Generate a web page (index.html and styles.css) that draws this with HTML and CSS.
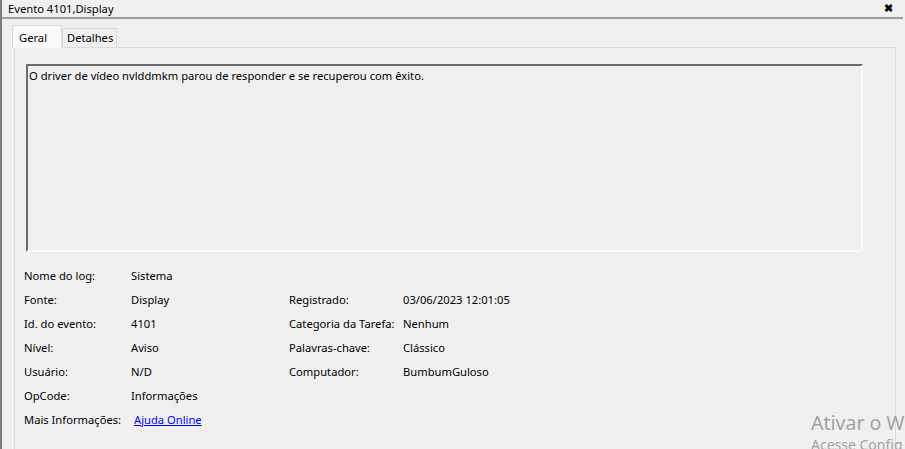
FILE: index.html
```html
<!DOCTYPE html>
<html lang="pt">
<head>
    <meta charset="UTF-8">
    <meta name="viewport" content="width=device-width, initial-scale=1.0">
    <title>Evento 4101,Display</title>
    <link rel="stylesheet" href="styles.css">
</head>
<body>

<!-- Janela de propriedades do evento -->
<div class="window">
    <div class="titlebar">
        <span class="title">Evento 4101,Display</span>
        <span class="close">&#x2716;</span>
    </div>

    <!-- Abas -->
    <div class="tabs">
        <div class="tab active">Geral</div>
        <div class="tab">Detalhes</div>
    </div>

    <div class="panel">
        <div class="description">O driver de vídeo nvlddmkm parou de responder e se recuperou com êxito.</div>

        <!-- Propriedades -->
        <div class="props">
            <span>Nome do log:</span><span>Sistema</span><span></span><span></span>
            <span>Fonte:</span><span>Display</span><span>Registrado:</span><span>03/06/2023 12:01:05</span>
            <span>Id. do evento:</span><span>4101</span><span>Categoria da Tarefa:</span><span>Nenhum</span>
            <span>Nível:</span><span>Aviso</span><span>Palavras-chave:</span><span>Clássico</span>
            <span>Usuário:</span><span>N/D</span><span>Computador:</span><span>BumbumGuloso</span>
            <span>OpCode:</span><span>Informações</span><span></span><span></span>
            <span>Mais Informações:</span><span><a href="#" class="link">Ajuda Online</a></span><span></span><span></span>
        </div>
    </div>
</div>

<!-- Marca d'água de ativação (cortada pela borda da janela) -->
<div class="watermark">
    <div class="wm-title">Ativar o W</div>
    <div class="wm-sub">Acesse Config</div>
</div>

</body>
</html>
```

FILE: styles.css
```css
html, body {
    margin: 0;
    height: 100%;
    overflow: hidden;
}

body {
    background-color: #f0f0f0;
    font-family: 'Noto Sans', 'Open Sans', sans-serif;
    font-size: 11.2px;
    color: #000;
    position: relative;
}

/* Window frame */
.window {
    height: 100%;
    border-left: 2px solid #7c7c7c;
    box-sizing: border-box;
}

.titlebar {
    height: 17px;
    border-bottom: 2px solid #a0a0a0;
    display: flex;
    justify-content: space-between;
    align-items: center;
    padding: 0 10px 0 6px;
    margin-right: 2px;
}

.title {
    line-height: 15px;
}

.close {
    font-size: 11px;
    font-weight: bold;
    line-height: 11px;
    margin-top: -3px;
}

/* Tabs */
.tabs {
    display: flex;
    align-items: flex-end;
    margin: 6px 0 0 10px;
    height: 22px;
}

.tab {
    padding: 0 3px 0 4px;
    height: 19px;
    line-height: 18px;
    background-color: #f0f0f0;
    border: 1px solid #dadada;
    border-bottom: none;
    box-sizing: border-box;
}

.tab.active {
    height: 23px;
    width: 50px;
    padding: 3px 0 0 6px;
    background-color: #f9f9f9;
    margin-bottom: -1px;
    position: relative;
    z-index: 1;
}

/* Tab panel */
.panel {
    margin-left: 12px;
    width: 882px;
    height: 440px;
    border: 1px solid #dcdcdc;
    box-sizing: border-box;
    padding: 16px 0 0 11px;
}

.description {
    width: 837px;
    height: 188px;
    box-sizing: border-box;
    border-top: 2px solid #6d6d6d;
    border-left: 2px solid #6d6d6d;
    border-right: 2px solid #fbfbfb;
    border-bottom: 2px solid #fbfbfb;
    padding: 2px 1px;
    line-height: 16px;
}

.props {
    display: grid;
    grid-template-columns: 107px 158px 114px auto;
    grid-auto-rows: 24px;
    margin: 12px 0 0 -2px;
    line-height: 24px;
}

.link {
    color: #0000ff;
    margin-left: 3px;
}

/* Activation watermark */
.watermark {
    position: absolute;
    left: 811px;
    top: 410px;
    color: #a3a3a3;
    white-space: nowrap;
}

.wm-title {
    font-size: 19.5px;
    line-height: 26px;
}

.wm-sub {
    font-size: 14px;
    line-height: 18px;
}
```
